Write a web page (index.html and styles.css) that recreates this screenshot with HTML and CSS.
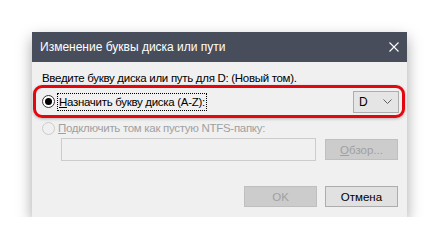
FILE: index.html
```html
<!DOCTYPE html>
<html lang="ru">
<head>
  <meta charset="UTF-8" />
  <meta name="viewport" content="width=device-width, initial-scale=1.0" />
  <title>Изменение буквы диска или пути</title>
  <link rel="stylesheet" href="styles.css">
</head>
<body>
  <div class="dialog">
    <div class="titlebar">
      <span class="title">Изменение буквы диска или пути</span>
      <svg class="close" width="10" height="10" viewBox="0 0 10 10">
        <path d="M0.5 0.5 L9.5 9.5 M9.5 0.5 L0.5 9.5" stroke="#ffffff" stroke-width="1.1" fill="none"/>
      </svg>
    </div>

    <div class="content">
      <div class="intro">Введите букву диска или путь для D: (Новый том).</div>

      <div class="option highlight">
        <span class="radio checked"></span>
        <span class="label focused"><u>Н</u>азначить букву диска (A-Z):</span>
        <div class="combo">
          <span>D</span>
          <svg width="9" height="5" viewBox="0 0 9 5">
            <path d="M0.5 0.5 L4.5 4.5 L8.5 0.5" stroke="#606060" stroke-width="1" fill="none"/>
          </svg>
        </div>
      </div>

      <div class="option disabled">
        <span class="radio"></span>
        <span class="label"><u>П</u>одключить том как пустую NTFS-папку:</span>
      </div>

      <div class="path-row">
        <div class="textbox"></div>
        <button class="btn" disabled><u>О</u>бзор...</button>
      </div>

      <div class="actions">
        <button class="btn" disabled>OK</button>
        <button class="btn">Отмена</button>
      </div>
    </div>
  </div>
</body>
</html>
```

FILE: styles.css
```css
body {
  margin: 0;
  background-color: #ffffff;
  font-family: 'Liberation Sans', sans-serif;
  font-size: 11.5px;
  color: #000000;
}
.dialog {
  margin: 32px 0 0 32px;
  width: 375px;
  height: 185px;
  background-color: #f0f0f0;
  box-shadow: 0 6px 14px rgba(0, 0, 0, 0.35);
}
.titlebar {
  height: 30px;
  background-color: #474d5b;
  display: flex;
  align-items: center;
  justify-content: space-between;
  padding: 0 8px 0 8px;
}
.title {
  color: #ffffff;
  font-size: 12px;
}
.content {
  padding: 8px 0 0 0;
  letter-spacing: -0.3px;
}
.intro {
  line-height: 16px;
  padding-left: 10px;
}
.option {
  display: flex;
  align-items: center;
  line-height: 16px;
}
.highlight {
  margin: -1px 2px 0 1px;
  height: 27px;
  padding: 0 3px 0 6px;
  border: 3px solid #e3080e;
  border-radius: 9px;
  box-shadow: 0 1px 3px rgba(0, 0, 0, 0.25);
}
.radio {
  width: 11px;
  height: 11px;
  border: 1px solid #333333;
  border-radius: 50%;
  background-color: #ffffff;
  display: flex;
  align-items: center;
  justify-content: center;
  margin-right: 3px;
}
.radio.checked::after {
  content: '';
  width: 7px;
  height: 7px;
  border-radius: 50%;
  background-color: #000000;
}
.label.focused {
  outline: 1px dotted #000000;
  padding: 0 1px;
}
.combo {
  margin-left: auto;
  width: 46px;
  height: 22px;
  border: 1px solid #adadad;
  background-color: #e5e5e5;
  display: flex;
  align-items: center;
  justify-content: space-between;
  padding: 0 6px 0 5px;
  box-sizing: border-box;
  font-size: 12px;
}
.disabled {
  color: #a0a0a0;
  padding: 2px 0 0 10px;
  height: 16px;
}
.disabled .radio {
  border-color: #cccccc;
  background-color: #f0f0f0;
}
.path-row {
  display: flex;
  align-items: center;
  padding: 2px 9px 0 29px;
}
.textbox {
  width: 253px;
  height: 21px;
  border: 1px solid #cccccc;
  background-color: #f0f0f0;
}
.btn {
  width: 73px;
  height: 21px;
  border: 1px solid #adadad;
  background-color: #e1e1e1;
  font-family: 'Liberation Sans', sans-serif;
  font-size: 11.5px;
  color: #000000;
  padding: 0;
  margin-left: auto;
}
.btn:disabled {
  background-color: #cccccc;
  border-color: #bfbfbf;
  color: #a0a0a0;
}
.actions {
  display: flex;
  justify-content: flex-end;
  gap: 8px;
  padding: 25px 9px 0 0;
}
.actions .btn {
  margin-left: 0;
}
```
